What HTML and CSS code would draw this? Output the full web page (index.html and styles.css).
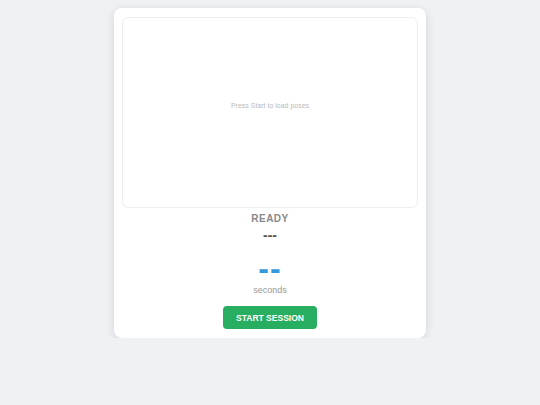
FILE: index.html
```html
<!DOCTYPE html>
<html lang="en">

<head>
  <meta charset="UTF-8">
  <title>Pose Session</title>
  <link rel="stylesheet" href="styles.css">
</head>

<body>
  <div class="session-box">
    <div id="stage" class="stage">
      <p class="placeholder">Press Start to load poses</p>
    </div>
    <div id="status" class="status">READY</div>
    <div id="poseName" class="pose-name">---</div>
    <div id="timer" class="timer">--</div>
    <div class="unit">seconds</div>
    <button id="startBtn" class="btn-start">START SESSION</button>
  </div>
</body>

</html>
```

FILE: styles.css
```css
body {
  background-color: #f0f1f5;
  font-family: "Liberation Sans", Arial, sans-serif;
  margin: 0;
  padding-top: 8px;
  display: flex;
  justify-content: center;
}

.session-box {
  background-color: #fff;
  width: 312px;
  box-sizing: border-box;
  padding: 9px 8px;
  border-radius: 8px;
  box-shadow: 0 2px 10px rgba(0, 0, 0, 0.12);
  text-align: center;
}

.stage {
  height: 191px;
  box-sizing: border-box;
  padding-bottom: 14px;
  border: 1px solid #eee;
  border-radius: 6px;
  display: flex;
  justify-content: center;
  align-items: center;
}

.placeholder {
  margin: 0;
  font-size: 7px;
  color: #bbb;
}

.status {
  margin-top: 5px;
  font-size: 10px;
  line-height: 12px;
  font-weight: bold;
  color: #888;
  letter-spacing: 0.5px;
}

.pose-name {
  margin-top: 2px;
  font-size: 14px;
  line-height: 16px;
  font-weight: bold;
  color: #555;
}

.timer {
  margin-top: 6px;
  font-size: 32px;
  line-height: 38px;
  font-weight: bold;
  letter-spacing: 1px;
  color: #3498db;
}

.unit {
  margin-top: -3px;
  font-size: 9px;
  line-height: 12px;
  color: #999;
}

.btn-start {
  margin-top: 10px;
  width: 94px;
  height: 23px;
  padding: 0;
  background-color: #27ae60;
  color: #fff;
  border: none;
  border-radius: 4px;
  font-family: "Liberation Sans", Arial, sans-serif;
  font-size: 8.5px;
  font-weight: bold;
  cursor: pointer;
}
```
